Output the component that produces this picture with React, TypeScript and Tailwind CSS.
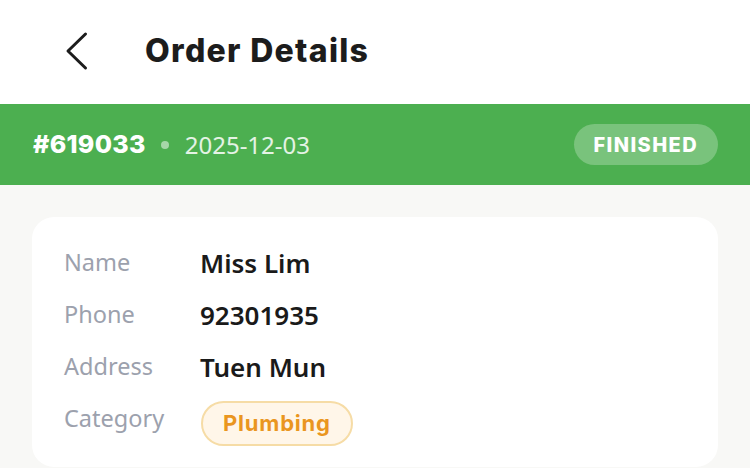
const rows = [
  { label: "Name", value: "Miss Lim" },
  { label: "Phone", value: "92301935" },
  { label: "Address", value: "Tuen Mun" },
]

const heading = { fontFamily: "Inter, 'Noto Sans', sans-serif" }
const body = { fontFamily: "'Noto Sans', 'Open Sans', sans-serif" }

export default function App() {
  return (
    <div className="flex h-[468px] w-[750px] flex-col overflow-hidden bg-[#f8f8f6]">
      <header className="flex h-[104px] shrink-0 items-center bg-white pl-[64px]">
        <svg width="26" height="40" viewBox="0 0 26 40" fill="none" aria-hidden="true" className="-mt-[2px]">
          <path d="M21.5 3 L4 20 L21.5 37" stroke="#1c1c1c" strokeWidth="3" strokeLinecap="round" strokeLinejoin="round" />
        </svg>
        <h1 className="ml-[55px] -mt-[2px] text-[32px] font-extrabold tracking-[1.3px] text-[#1c1c1c]" style={heading}>
          Order Details
        </h1>
      </header>

      <div className="flex h-[81px] shrink-0 items-center justify-between bg-[#4caf50] pl-[33px] pr-[32px]">
        <div className="flex items-center">
          <span className="text-[25px] font-extrabold tracking-[0.3px] text-white" style={heading}>#619033</span>
          <span className="ml-[15px] size-[8px] rounded-full bg-white/50" />
          <span className="ml-[16px] text-[24px] text-white/85" style={body}>2025-12-03</span>
        </div>
        <span
          className="flex h-[41px] items-center rounded-full bg-white/25 px-[20px] text-[20px] font-extrabold tracking-[1.4px] text-white"
          style={heading}
        >
          FINISHED
        </span>
      </div>

      <div className="shrink-0 px-[32px] pt-[32px]">
        <div className="rounded-[22px] bg-white px-[32px] pt-[29px] pb-[31px]">
          <div className="flex flex-col gap-[18px]">
            {rows.map((row) => (
              <div key={row.label} className="flex h-[34px] items-center" style={body}>
                <span className="w-[136px] text-[23.5px] text-[#9ca1ad]">{row.label}</span>
                <span className="text-[26px] font-semibold text-[#1a1a1a]">{row.value}</span>
              </div>
            ))}
            <div className="flex h-[34px] items-center" style={body}>
              <span className="w-[137px] text-[23.5px] text-[#9ca1ad]">Category</span>
              <span
                className="mt-[9px] flex h-[45px] items-center rounded-full border-2 border-[#f6dca6] bg-[#fff6e9] px-[20px] text-[22px] font-bold tracking-[0.8px] text-[#ea961f]"
                style={heading}
              >
                Plumbing
              </span>
            </div>
          </div>
        </div>
      </div>
    </div>
  )
}
